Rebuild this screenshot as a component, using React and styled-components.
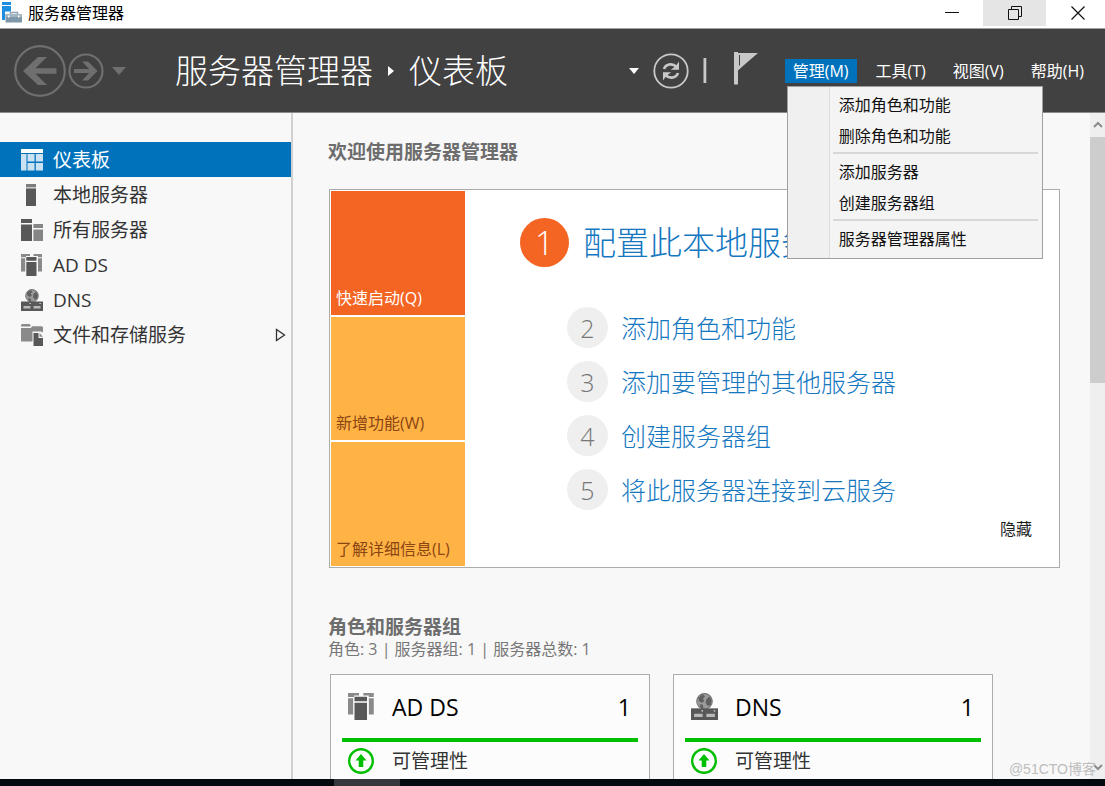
import * as React from "react";
import styled, { createGlobalStyle } from "styled-components";

const GlobalStyle = createGlobalStyle`
  :root {
    --blue: #0072bc;
    --link: #1477bf;
    --dark: #414141;
    --offwhite: #f8f8f8;
    --orange: #f46523;
    --amber: #ffb345;
    --green: #00be00;
    --border: #acacac;
  }
  * {
    box-sizing: border-box;
  }
  body {
    margin: 0;
    overflow: hidden;
  }
  body,
  button {
    font-family: "Open Sans", "Noto Sans CJK SC", sans-serif;
    font-size: 16px;
    line-height: 24px;
  }
  button {
    border: 0;
    padding: 0;
    background: none;
    color: inherit;
  }
  a {
    color: inherit;
    text-decoration: none;
  }
  h1, h2, p, ul, ol {
    margin: 0;
    padding: 0;
    font-weight: 400;
    list-style: none;
  }
  svg {
    display: block;
    flex: none;
  }
`;

const Window = styled.div`
  position: relative;
  display: flex;
  flex-direction: column;
  height: 100vh;
  background: var(--offwhite);
  color: #1e1e1e;
`;

const TitleBar = styled.div`
  display: flex;
  flex: none;
  height: 28px;
  padding-left: 2px;
  background: #fff;
  color: #000;

  .caption {
    flex: 1;
    margin-left: 4px;
    line-height: 26px;
  }
`;

const WindowButton = styled.button`
  display: flex;
  align-items: center;
  justify-content: center;
  width: 63px;
  height: 26px;
  background: ${({ $hover }) => ($hover ? "#e5e5e5" : "transparent")};

  &:last-child {
    width: 59px;
    padding-left: 4px;
  }
`;

const Header = styled.header`
  display: flex;
  align-items: center;
  flex: none;
  height: 85px;
  padding: 0 13px 0 14px;
  border-top: 1px solid #a0a0a0;
  border-bottom: 1px solid #8a8a8a;
  background: var(--dark);
  color: #fff;
`;

const HistoryNav = styled.div`
  display: flex;
  align-items: center;
  gap: 2px;
  width: 161px;
  color: #6f6f6f;

  .history {
    margin-left: 6px;
  }
`;

const Breadcrumb = styled.h1`
  display: flex;
  align-items: center;
  flex: 1;
  gap: 14px;
  font-size: 33px;
  font-weight: 300;
  line-height: 48px;
  white-space: nowrap;
`;

const Tools = styled.div`
  display: flex;
  align-items: center;
  gap: 14px;
  margin-right: 27px;
  color: #c8c8c8;

  .flag {
    display: flex;
    align-items: center;
    gap: 27px;
  }
`;

const MenuBar = styled.nav`
  display: flex;
  gap: 11px;
`;

const MenuSlot = styled.div`
  position: relative;
`;

const MenuButton = styled.button`
  padding: 0 8px;
  background: ${({ $open }) => ($open ? "var(--blue)" : "transparent")};
  white-space: nowrap;
`;

const DropDown = styled.ul`
  position: absolute;
  z-index: 2;
  top: 27px;
  left: 2px;
  width: 256px;
  padding: 3px 4px 3px 45px;
  border: 1px solid #a0a0a0;
  background: linear-gradient(
    90deg,
    #f0f0f0 41px,
    #dcdcdc 41px,
    #dcdcdc 42px,
    #f4f4f4 42px
  );
  color: #111;
`;

const DropItem = styled.li`
  button {
    display: block;
    width: 100%;
    height: 31px;
    padding-left: 6px;
    text-align: left;
  }
`;

const DropRule = styled.li`
  height: 5px;
  border-top: 2px solid #d7d7d7;
`;

const Body = styled.div`
  display: flex;
  flex: 1;
  min-height: 0;
`;

const Sidebar = styled.nav`
  flex: none;
  width: 293px;
  padding-top: 29px;
  border-right: 2px solid #d0d0d0;
`;

const SideLink = styled.a`
  display: flex;
  align-items: center;
  gap: 10px;
  height: 35px;
  padding: 0 5px 0 21px;
  font-size: 19px;
  background: ${({ $active }) => ($active ? "var(--blue)" : "transparent")};
  color: ${({ $active }) => ($active ? "#fff" : "#333")};

  .arrow {
    margin-left: auto;
  }
`;

const Content = styled.main`
  flex: 1;
  min-width: 0;
  padding: 27px 30px 0 35px;
  overflow: hidden;
`;

const SectionTitle = styled.h2`
  color: #6d6d6d;
  font-size: 19px;
  font-weight: 700;
  line-height: 24px;
`;

const Welcome = styled.section`
  display: flex;
  min-height: 379px;
  margin: 25px 0 47px 1px;
  padding: 1px;
  border: 1px solid var(--border);
  background: #fff;
`;

const Tiles = styled.div`
  display: flex;
  flex-direction: column;
  flex: none;
  gap: 2px;
  width: 134px;
`;

const Tile = styled.button`
  display: flex;
  flex: 1;
  align-items: flex-end;
  padding: 0 5px 5px;
  background: ${({ $active }) => ($active ? "var(--orange)" : "var(--amber)")};
  color: ${({ $active }) => ($active ? "#fff" : "#8b4513")};
  white-space: nowrap;
`;

const Steps = styled.ol`
  display: flex;
  flex: 1;
  flex-direction: column;
  gap: 13px;
  padding: 27px 0 0 55px;
`;

const Step = styled.li`
  margin: ${({ $main }) => ($main ? "0 0 27px" : "0 0 0 47px")};

  a {
    display: flex;
    align-items: center;
    gap: ${({ $main }) => ($main ? "14px" : "13px")};
    color: var(--link);
    font-size: ${({ $main }) => ($main ? "33px" : "25px")};
    font-weight: 300;
    line-height: 40px;
    white-space: nowrap;
  }
`;

const StepNumber = styled.span`
  display: flex;
  align-items: center;
  justify-content: center;
  width: ${({ $main }) => ($main ? "49px" : "41px")};
  height: ${({ $main }) => ($main ? "49px" : "41px")};
  border-radius: 50%;
  background: ${({ $main }) => ($main ? "var(--orange)" : "#efefef")};
  color: ${({ $main }) => ($main ? "#fff" : "#777")};
`;

const HideButton = styled.button`
  align-self: flex-end;
  margin: 0 26px 25px 0;
`;

const Summary = styled.p`
  color: #777;
  line-height: 20px;
`;

const Groups = styled.div`
  display: flex;
  gap: 23px;
  margin: 15px 0 0 2px;
`;

const Group = styled.article`
  flex: none;
  width: 320px;
  height: 240px;
  padding: 0 11px;
  border: 1px solid var(--border);
  background: #fcfcfc;
`;

const GroupHead = styled.div`
  display: grid;
  grid-template-columns: 44px 1fr auto;
  align-items: center;
  height: 67px;
  padding: 0 7px 0 6px;
  border-bottom: 4px solid var(--green);
  color: #000;
  font-size: 23px;
`;

const GroupRow = styled.a`
  display: grid;
  grid-template-columns: 44px 1fr;
  align-items: center;
  height: 38px;
  padding-left: 6px;
  color: #333;
  font-size: 19px;
`;

const ScrollBar = styled.div`
  display: flex;
  flex: none;
  flex-direction: column;
  align-items: center;
  justify-content: space-between;
  width: 15px;
  background: #efefef;

  svg {
    margin: 8px 0;
  }
  .thumb {
    width: 100%;
    height: 37%;
    margin-bottom: auto;
    background: #cdcdcd;
  }
`;

const TaskBar = styled.div`
  flex: none;
  height: 7px;
  padding-left: 334px;
  background: #04080f;

  .running {
    width: 66px;
    height: 7px;
    background: #35383d;
  }
`;

const Watermark = styled.span`
  position: absolute;
  right: 9px;
  bottom: 5px;
  color: #bdbdbd;
  font-family: "Liberation Sans", "Noto Sans CJK SC", sans-serif;
  font-size: 14px;
`;

const icons = {
  dashboard: (
    <>
      <path fill="#fff" d="M0 0h22v4H0z" />
      <path
        fill="#cbe2f2"
        d="M0 5h5.500v16.500H0zM6.500 5h7v7.500h-7zM14.800 5H22v7.500h-7.200zM6.500 14h7v7.500h-7zM14.800 14H22v7.500h-7.200z"
      />
    </>
  ),
  server: (
    <>
      <path fill="#7d7d7d" d="M5 0h10v3.400H5z" />
      <path fill="#585858" d="M5 4.400h10V22H5z" />
    </>
  ),
  servers: (
    <>
      <path fill="#585858" d="M0 0h11v4H0zM0 5.400h11V22H0z" />
      <path fill="#858585" d="M12.400 5H22v4h-9.600zM12.400 10.500H22V22h-9.600z" />
    </>
  ),
  adds: (
    <>
      <path
        fill="#8a8a8a"
        d="M0 0h9v2H5v1.200H0zM0 4.200h4.200v13.300H0zM12.500 0H21v3.200h-4V2h-4.500zM17 4.200h4v13.300h-4z"
      />
      <path fill="#585858" d="M5.300 3h10.200v3.800H5.300zM5.300 8h10.200v14H5.300z" />
    </>
  ),
  dns: (
    <>
      <circle cx="11" cy="6.800" r="6.300" fill="#9a9a9a" stroke="#777" />
      <path
        fill="#606060"
        d="M6 3.800 9.400 1l2 1.600-1.600 1.800 1 2.300-2.200 1.200L6.400 6.600zM12.400 5.200l2.600-2.400 1.800 3-.8 4-2.400.8-1.600-2.600zM7 9.200l2.600.4.600 2.800H8z"
      />
      <path fill="#585858" d="M0 12.500h22V22H0z" />
      <path fill="#b9b9b9" d="M2.500 17h7v2.500h-7zM12.500 17h7v2.500h-7z" />
      <path fill="#ddd" d="M8.500 14h1.300v1H8.500zM18.500 14h1.300v1h-1.300z" />
    </>
  ),
  files: (
    <>
      <path
        fill="#8a8a8a"
        d="M0 1l1-1h7.500l1 1v1.500H0zM0 4h10l1-1.800h10l1 1V8.500L20 7.500h-8.500v10H0z"
      />
      <path fill="#585858" d="M12.500 9h5v5H22v8h-9.500z" />
      <path fill="#8a8a8a" d="M18.500 9 22 12.700h-3.500z" />
    </>
  ),
};

function Icon({ name, size = 22 }) {
  return (
    <svg width={size} height={size} viewBox="0 0 22 22" aria-hidden="true">
      {icons[name]}
    </svg>
  );
}

function Triangle({ width, height, d, ...rest }) {
  return (
    <svg
      width={width}
      height={height}
      viewBox={`0 0 ${width} ${height}`}
      fill="currentColor"
      aria-hidden="true"
      {...rest}
    >
      <path d={d} />
    </svg>
  );
}

function AppIcon() {
  return (
    <svg width="22" height="24" viewBox="0 0 22 24" aria-hidden="true">
      <path fill="#1e8fe0" d="M0 2h9v3H0zM0 6h9v14H0z" />
      <path fill="#fff" d="M3 11.500h19V23H3z" />
      <path fill="none" stroke="#8ea4b4" strokeWidth="1.500" d="M8.500 14v-1.500h7V14" />
      <path fill="#7f98a9" d="M3.500 14H20v8.500H3.500z" />
      <path fill="#a3b6c3" d="M3.500 14H20v3H3.500z" />
      <path fill="#fff" d="M6 15.500h1.500v2H6zM16 15.500h1.500v2H16z" />
    </svg>
  );
}

const sideItems = [
  { icon: "dashboard", label: "仪表板", active: true },
  { icon: "server", label: "本地服务器" },
  { icon: "servers", label: "所有服务器" },
  { icon: "adds", label: "AD DS" },
  { icon: "dns", label: "DNS" },
  { icon: "files", label: "文件和存储服务", more: true },
];

const steps = [
  "配置此本地服务器",
  "添加角色和功能",
  "添加要管理的其他服务器",
  "创建服务器组",
  "将此服务器连接到云服务",
];

const groups = [
  { icon: "adds", name: "AD DS", count: 1 },
  { icon: "dns", name: "DNS", count: 1 },
];

// null draws a rule between two blocks of commands
const manageItems = [
  "添加角色和功能",
  "删除角色和功能",
  null,
  "添加服务器",
  "创建服务器组",
  null,
  "服务器管理器属性",
];

function WindowTitle() {
  return (
    <TitleBar>
      <AppIcon />
      <span className="caption">服务器管理器</span>
      <WindowButton aria-label="最小化">
        <svg width="14" height="14" stroke="#111">
          <path d="M0 6.500h14" />
        </svg>
      </WindowButton>
      <WindowButton $hover aria-label="还原">
        <svg width="14" height="14" fill="none" stroke="#111">
          <path d="M.5 3.500h10v10H.5zM3.500 3.500v-3h10v10h-3" />
        </svg>
      </WindowButton>
      <WindowButton aria-label="关闭">
        <svg width="14" height="14" stroke="#111" strokeWidth="1.200">
          <path d="m.5.5 13 13M13.500.5l-13 13" />
        </svg>
      </WindowButton>
    </TitleBar>
  );
}

function TopBar() {
  return (
    <Header>
      <HistoryNav>
        <button aria-label="后退">
          <svg width="52" height="52" viewBox="0 0 52 52" fill="none">
            <circle cx="26" cy="26" r="24.800" stroke="currentColor" strokeWidth="2.200" />
            <path
              fill="currentColor"
              d="M9 26 24 12h9L21.500 23.200H42.500v5.600H21.500L33 40h-9z"
            />
          </svg>
        </button>
        <button aria-label="前进">
          <svg width="36" height="36" viewBox="0 0 36 36" fill="none">
            <circle cx="18" cy="18" r="16.500" stroke="currentColor" strokeWidth="2.200" />
            <path
              fill="currentColor"
              d="M29.500 18 20 8.500h-6l7.200 7.500H6v4h15.200L14 27.500h6z"
            />
          </svg>
        </button>
        <button className="history" aria-label="历史记录">
          <Triangle width={14} height={8} d="M0 0h14L7 8z" />
        </button>
      </HistoryNav>
      <Breadcrumb>
        <span>服务器管理器</span>
        <Triangle width={8} height={12} d="M1 1l6 5-6 5z" />
        <span>仪表板</span>
      </Breadcrumb>
      <Tools>
        <button aria-label="位置">
          <Triangle width={10} height={6} d="M0 0h10L5 6z" color="#fff" />
        </button>
        <button aria-label="刷新">
          <svg width="36" height="36" viewBox="0 0 36 36" fill="none">
            <circle cx="18" cy="18" r="16.700" stroke="currentColor" strokeWidth="1.800" />
            <path
              stroke="currentColor"
              strokeWidth="2.600"
              d="M11 16c1.400-4.800 8-6.400 12.500-2.300M25 20c-1.400 4.800-8 6.400-12.500 2.300"
            />
            <path
              fill="currentColor"
              d="M26 8.500v8.300h-8.200l3-2.300 2.700-2.500zM10 27.500v-8.300h8.200l-3 2.300-2.700 2.500z"
            />
          </svg>
        </button>
        <span className="flag">
          <svg width="4" height="26" fill="currentColor">
            <path d="M.5 0h2.800v25H.5z" />
          </svg>
          <button aria-label="通知">
            <svg width="24" height="40" viewBox="0 0 24 40">
              <path fill="currentColor" d="M0 1h4v32.500H0zM4 2h20L9.500 14.500 4 19.500z" />
              <path stroke="#414141" d="M5.500 4v10.500" />
            </svg>
          </button>
        </span>
      </Tools>
      <MenuBar>
        <MenuSlot>
          <MenuButton $open aria-expanded="true">
            管理(M)
          </MenuButton>
          <DropDown>
            {manageItems.map((label, i) =>
              label ? (
                <DropItem key={label}>
                  <button>{label}</button>
                </DropItem>
              ) : (
                <DropRule key={i} />
              )
            )}
          </DropDown>
        </MenuSlot>
        <MenuButton>工具(T)</MenuButton>
        <MenuButton>视图(V)</MenuButton>
        <MenuButton>帮助(H)</MenuButton>
      </MenuBar>
    </Header>
  );
}

function QuickStart() {
  return (
    <Welcome>
      <Tiles>
        <Tile $active>快速启动(Q)</Tile>
        <Tile>新增功能(W)</Tile>
        <Tile>了解详细信息(L)</Tile>
      </Tiles>
      <Steps>
        {steps.map((label, i) => (
          <Step key={label} $main={i === 0}>
            <a href="#step">
              <StepNumber $main={i === 0}>{i + 1}</StepNumber>
              {label}
            </a>
          </Step>
        ))}
      </Steps>
      <HideButton>隐藏</HideButton>
    </Welcome>
  );
}

function RoleGroup({ icon, name, count }) {
  return (
    <Group>
      <GroupHead>
        <Icon name={icon} size={27} />
        <span>{name}</span>
        <span>{count}</span>
      </GroupHead>
      <GroupRow href="#manageability">
        <svg width="26" height="26" viewBox="0 0 26 26" aria-hidden="true">
          <circle cx="13" cy="13" r="11.800" fill="#fff" stroke="#00be00" strokeWidth="2.400" />
          <path fill="#00be00" d="m13 6 5.500 6.500h-3.200V19h-4.600v-6.500H7.500z" />
        </svg>
        可管理性
      </GroupRow>
    </Group>
  );
}

export default function App() {
  return (
    <>
      <GlobalStyle />
      <Window>
        <WindowTitle />
        <TopBar />
        <Body>
          <Sidebar>
            {sideItems.map(({ icon, label, active, more }) => (
              <SideLink key={label} href="#view" $active={active}>
                <Icon name={icon} />
                {label}
                {more && (
                  <svg className="arrow" width="11" height="14" fill="none" stroke="#333">
                    <path strokeWidth="1.300" d="M1.500 1.500v11L9.500 7z" />
                  </svg>
                )}
              </SideLink>
            ))}
          </Sidebar>
          <Content>
            <SectionTitle>欢迎使用服务器管理器</SectionTitle>
            <QuickStart />
            <SectionTitle>角色和服务器组</SectionTitle>
            <Summary>角色: 3 | 服务器组: 1 | 服务器总数: 1</Summary>
            <Groups>
              {groups.map((group) => (
                <RoleGroup key={group.name} {...group} />
              ))}
            </Groups>
          </Content>
          <ScrollBar>
            <svg width="10" height="8" fill="none" stroke="#8c8c8c" strokeWidth="2">
              <path d="m1 6 4-4 4 4" />
            </svg>
            <div className="thumb" />
            <svg width="10" height="8" fill="none" stroke="#8c8c8c" strokeWidth="2">
              <path d="m1 2 4 4 4-4" />
            </svg>
          </ScrollBar>
        </Body>
        <TaskBar>
          <div className="running" />
        </TaskBar>
        <Watermark>@51CTO博客</Watermark>
      </Window>
    </>
  );
}
